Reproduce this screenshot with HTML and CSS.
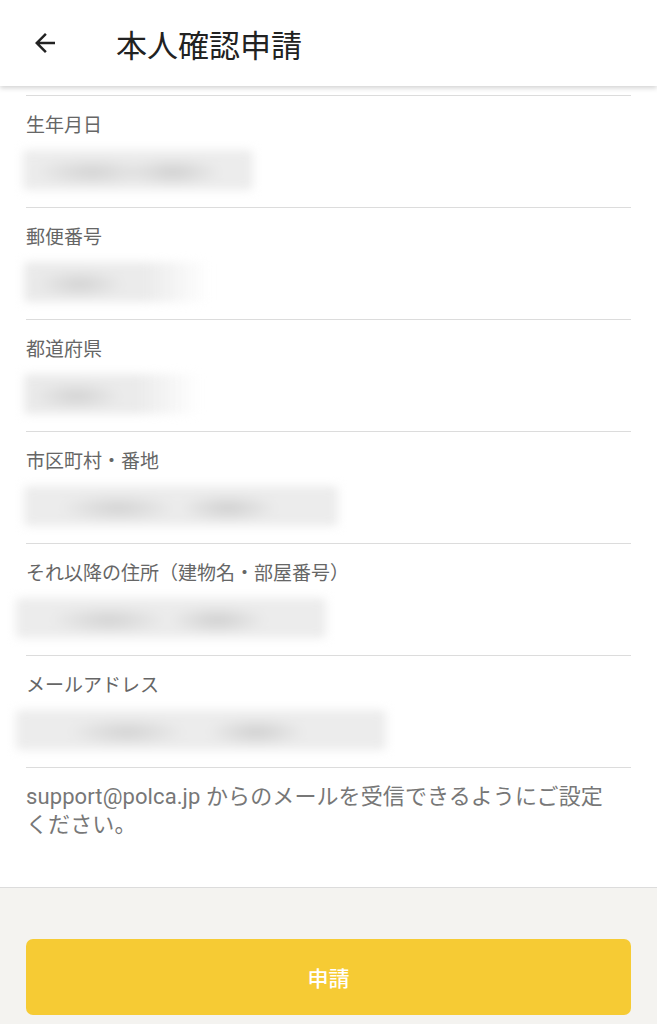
FILE: index.html
```html
<!DOCTYPE html>
<html lang="ja">
<head>
<meta charset="utf-8">
<title>本人確認申請</title>
<link rel="stylesheet" href="styles.css">
</head>
<body>
<header class="appbar">
  <span class="back">
    <svg width="30" height="30" viewBox="0 0 24 24"><path d="M20 11H7.83l5.59-5.59L12 4l-8 8 8 8 1.41-1.41L7.83 13H20v-2z" fill="#222"/></svg>
  </span>
  <h1 class="title">本人確認申請</h1>
</header>
<main class="content">
  <div class="list">
    <div class="field">
      <div class="label">生年月日</div>
      <div class="value"><div class="blur" style="width:230px;margin-left:-3px"></div></div>
    </div>
    <div class="field">
      <div class="label">郵便番号</div>
      <div class="value"><div class="blur short" style="width:186px;margin-left:-2px"></div></div>
    </div>
    <div class="field">
      <div class="label">都道府県</div>
      <div class="value"><div class="blur short" style="width:176px;margin-left:-2px"></div></div>
    </div>
    <div class="field">
      <div class="label">市区町村・番地</div>
      <div class="value"><div class="blur" style="width:314px;margin-left:-2px"></div></div>
    </div>
    <div class="field">
      <div class="label">それ以降の住所（建物名・部屋番号）</div>
      <div class="value"><div class="blur" style="width:310px;margin-left:-10px"></div></div>
    </div>
    <div class="field">
      <div class="label">メールアドレス</div>
      <div class="value"><div class="blur" style="width:370px;margin-left:-10px"></div></div>
    </div>
    <p class="note">support@polca.jp からのメールを受信できるようにご設定<br>ください。</p>
  </div>
</main>
<footer class="footer">
  <button class="submit">申請</button>
</footer>
</body>
</html>
```
FILE: styles.css
```css
* { box-sizing: border-box; }
html, body { margin: 0; padding: 0; }
body {
  width: 657px;
  height: 1024px;
  overflow: hidden;
  background: #fff;
  font-family: Roboto, "Noto Sans CJK JP", sans-serif;
  display: flex;
  flex-direction: column;
}
.appbar {
  height: 86px;
  flex: none;
  display: flex;
  align-items: center;
  background: #fff;
  box-shadow: 0 2px 5px rgba(0,0,0,0.18);
  position: relative;
  z-index: 1;
}
.back {
  width: 30px;
  height: 30px;
  margin-left: 30px;
  display: flex;
}
.title {
  margin: 0 0 0 56px;
  font-size: 31px;
  font-weight: 400;
  color: #222;
}
.content {
  flex: 1;
  padding-top: 9px;
  overflow: hidden;
}
.list {
  margin: 0 26px;
  border-top: 1px solid #dcdcdc;
}
.field {
  height: 112px;
  border-bottom: 1px solid #dcdcdc;
  padding-top: 18px;
}
.label {
  font-size: 19px;
  line-height: 24px;
  color: #666;
}
.value {
  margin-top: 12px;
  height: 40px;
}
.blur {
  height: 40px;
  background:
    radial-gradient(ellipse 60px 14px at 30% 55%, #d2d2d2, transparent),
    radial-gradient(ellipse 50px 14px at 65% 55%, #cfcfcf, transparent),
    #ececec;
  filter: blur(5px);
  border-radius: 4px;
}
.blur.short {
  background:
    radial-gradient(ellipse 45px 14px at 30% 55%, #d2d2d2, transparent),
    linear-gradient(90deg, #eaeaea 0%, #ebebeb 65%, rgba(240,240,240,0) 100%);
}
.note {
  margin: 0;
  padding-top: 15px;
  font-size: 22px;
  line-height: 28px;
  letter-spacing: 0.1px;
  color: #777;
  white-space: nowrap;
}
.footer {
  flex: none;
  height: 137px;
  background: #f4f3f0;
  border-top: 1px solid #dcdcdc;
  padding: 51px 26px 0;
}
.submit {
  display: block;
  width: 100%;
  height: 76px;
  border: none;
  border-radius: 7px;
  background: #f6cb34;
  color: #fff;
  font-family: Roboto, "Noto Sans CJK JP", sans-serif;
  font-size: 21px;
  font-weight: 500;
  padding: 0;
}
```
